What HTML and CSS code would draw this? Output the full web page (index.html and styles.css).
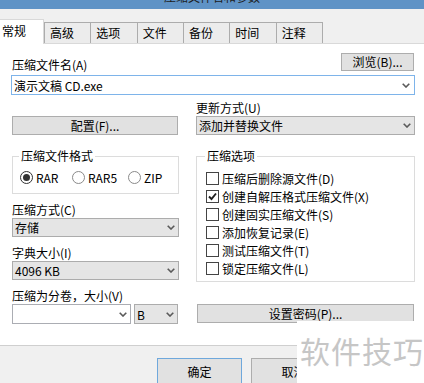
FILE: index.html
```html
<!DOCTYPE html>
<html lang="zh-CN">
<head>
<meta charset="UTF-8">
<title>压缩文件名和参数</title>
<link rel="stylesheet" href="styles.css">
</head>
<body>
<div class="window">
<div class="titlebar"><span class="title">压缩文件名和参数</span></div>
<div class="tabs">
<div class="tab active">常规</div>
<div class="tab">高级</div>
<div class="tab">选项</div>
<div class="tab">文件</div>
<div class="tab">备份</div>
<div class="tab">时间</div>
<div class="tab">注释</div>
</div>
<div class="page">
<div class="row-top">
<span class="lbl lbl-name">压缩文件名(A)</span>
<button class="btn btn-browse">浏览(B)...</button>
</div>
<div class="combo combo-focus">
<span class="value">演示文稿 CD.exe</span>
<svg class="arrow" width="8" height="5" viewBox="0 0 8 5"><polyline points="0.7,0.7 4,4 7.3,0.7" fill="none" stroke="#5a5a5a" stroke-width="1.6"/></svg>
</div>
<div class="cols">
<!-- left column -->
<div class="col col-left">
<button class="btn btn-config">配置(F)...</button>
<fieldset class="group">
<legend>压缩文件格式</legend>
<div class="radios">
<label class="radio radio-rar"><span class="dot checked"></span>RAR</label>
<label class="radio radio-rar5"><span class="dot"></span>RAR5</label>
<label class="radio"><span class="dot"></span>ZIP</label>
</div>
</fieldset>
<div class="lbl">压缩方式(C)</div>
<div class="select">
<span class="value">存储</span>
<svg class="arrow" width="8" height="5" viewBox="0 0 8 5"><polyline points="0.7,0.7 4,4 7.3,0.7" fill="none" stroke="#5a5a5a" stroke-width="1.6"/></svg>
</div>
<div class="lbl">字典大小(I)</div>
<div class="select">
<span class="value">4096 KB</span>
<svg class="arrow" width="8" height="5" viewBox="0 0 8 5"><polyline points="0.7,0.7 4,4 7.3,0.7" fill="none" stroke="#5a5a5a" stroke-width="1.6"/></svg>
</div>
<div class="lbl">压缩为分卷，大小(V)</div>
<div class="split">
<div class="combo combo-vol">
<span class="value"></span>
<svg class="arrow" width="8" height="5" viewBox="0 0 8 5"><polyline points="0.7,0.7 4,4 7.3,0.7" fill="none" stroke="#5a5a5a" stroke-width="1.6"/></svg>
</div>
<div class="select select-unit">
<span class="value">B</span>
<svg class="arrow" width="8" height="5" viewBox="0 0 8 5"><polyline points="0.7,0.7 4,4 7.3,0.7" fill="none" stroke="#5a5a5a" stroke-width="1.6"/></svg>
</div>
</div>
</div>
<!-- right column -->
<div class="col col-right">
<div class="lbl lbl-update">更新方式(U)</div>
<div class="select">
<span class="value">添加并替换文件</span>
<svg class="arrow" width="8" height="5" viewBox="0 0 8 5"><polyline points="0.7,0.7 4,4 7.3,0.7" fill="none" stroke="#5a5a5a" stroke-width="1.6"/></svg>
</div>
<fieldset class="group group-opts">
<legend>压缩选项</legend>
<label class="check"><span class="box"></span>压缩后删除源文件(D)</label>
<label class="check"><span class="box"><svg width="11" height="11" viewBox="0 0 11 11"><polyline points="2,5.5 4.5,8 9,2.5" fill="none" stroke="#1e1e1e" stroke-width="1.9"/></svg></span>创建自解压格式压缩文件(X)</label>
<label class="check"><span class="box"></span>创建固实压缩文件(S)</label>
<label class="check"><span class="box"></span>添加恢复记录(E)</label>
<label class="check"><span class="box"></span>测试压缩文件(T)</label>
<label class="check"><span class="box"></span>锁定压缩文件(L)</label>
</fieldset>
<button class="btn btn-pass">设置密码(P)...</button>
</div>
</div>
</div>
<div class="footer">
<button class="btn btn-dlg btn-ok">确定</button>
<button class="btn btn-dlg">取消</button>
</div>
<div class="watermark">软件技巧</div>
</div>
</body>
</html>
```

FILE: styles.css
```css
body {
margin: 0;
background-color: #f0f0f0;
font-family: "Noto Sans CJK SC", "Liberation Sans", sans-serif;
font-size: 12px;
color: #000;
}
.window {
position: relative;
width: 424px;
height: 383px;
overflow: hidden;
background-color: #f0f0f0;
}
.titlebar {
height: 9px;
background-color: #5f93c6;
text-align: center;
overflow: hidden;
}
.title {
display: block;
line-height: 12px;
margin-top: -9px;
color: #1c1c1c;
}
.tabs {
display: flex;
align-items: flex-end;
height: 34px;
margin-left: -3px;
}
.tab {
box-sizing: border-box;
width: 47.33px;
height: 21px;
line-height: 19px;
padding-left: 5px;
background-color: #ececec;
border: 1px solid #acacac;
border-bottom: none;
margin-left: -1px;
}
.tab.active {
position: relative;
z-index: 1;
width: 47px;
height: 25px;
line-height: 21px;
padding-left: 4px;
margin-left: 0;
margin-right: 1px;
margin-bottom: -1px;
background-color: #fff;
border-color: #d9d9d9;
}
.page {
box-sizing: border-box;
height: 303px;
padding: 9px 9px 0 11px;
background-color: #fff;
border-top: 1px solid #d9d9d9;
border-bottom: 1px solid #cfcfcf;
}
.row-top {
display: flex;
justify-content: space-between;
align-items: flex-end;
height: 18px;
}
.lbl {
display: block;
line-height: 16px;
margin-top: 8px;
white-space: nowrap;
}
.lbl-name {
margin: 0 0 -1px 1px;
line-height: 14px;
}
.btn {
box-sizing: border-box;
font-family: inherit;
font-size: 12px;
color: #000;
background-color: #e1e1e1;
border: 1px solid #adadad;
padding: 0;
line-height: 16px;
text-align: center;
}
.btn-browse {
width: 73px;
height: 18px;
margin-right: 1px;
}
.combo,
.select {
box-sizing: border-box;
display: flex;
align-items: center;
justify-content: space-between;
height: 19px;
padding: 0 3px 0 2px;
border: 1px solid #acacac;
background-color: #e5e5e5;
}
.combo {
height: 20px;
background-color: #fff;
border-color: #abadb3;
}
.combo-focus {
margin-top: 4px;
border-color: #7eb4ea;
padding-right: 4px;
}
.value {
white-space: nowrap;
}
.arrow {
flex-shrink: 0;
}
.cols {
display: flex;
gap: 17px;
margin-left: 1px;
}
.col {
display: flex;
flex-direction: column;
}
.col-left {
width: 167px;
}
.col-right {
width: 219px;
}
.btn-config {
width: 166px;
height: 19px;
margin-top: 21px;
}
.group {
margin: 14px 0 0 0;
padding: 0 0 8px 7px;
border: 1px solid #dcdcdc;
min-width: 0;
}
.group legend {
padding: 0 2px;
margin-left: -1px;
line-height: 14px;
}
.radios {
display: flex;
align-items: center;
height: 16px;
margin-top: 6px;
}
.radio {
display: flex;
align-items: center;
gap: 3px;
}
.radio-rar {
width: 52px;
}
.radio-rar5 {
width: 56px;
}
.dot {
box-sizing: border-box;
width: 13px;
height: 13px;
border: 1px solid #8a8a8a;
border-radius: 50%;
background-color: #fff;
display: flex;
align-items: center;
justify-content: center;
}
.dot.checked {
border-color: #333;
}
.dot.checked::after {
content: "";
width: 7px;
height: 7px;
border-radius: 50%;
background-color: #333;
}
.split {
display: flex;
gap: 3px;
}
.combo-vol {
width: 119px;
}
.select-unit {
width: 44px;
height: 20px;
}
.lbl-update {
margin-top: 5px;
}
.group-opts {
padding: 0 0 4px 9px;
}
.check {
display: flex;
align-items: center;
gap: 3px;
height: 18px;
white-space: nowrap;
}
.check:first-of-type {
margin-top: 6px;
}
.box {
box-sizing: border-box;
width: 13px;
height: 13px;
border: 1px solid #444;
background-color: #fff;
display: flex;
align-items: center;
justify-content: center;
}
.btn-pass {
width: 217px;
height: 19px;
margin: 22px 0 0 1px;
}
.footer {
display: flex;
gap: 9px;
padding: 12px 0 0 157px;
}
.btn-dlg {
flex-shrink: 0;
width: 85px;
height: 28px;
line-height: 24px;
}
.btn-ok {
border-color: #6fa8dc;
}
.watermark {
position: absolute;
left: 297px;
top: 321px;
width: 127px;
height: 62px;
box-sizing: border-box;
padding: 14px 0 0 3px;
background-color: #fff;
color: #c6c6c6;
font-size: 30px;
line-height: 31px;
letter-spacing: 1px;
white-space: nowrap;
}
```
